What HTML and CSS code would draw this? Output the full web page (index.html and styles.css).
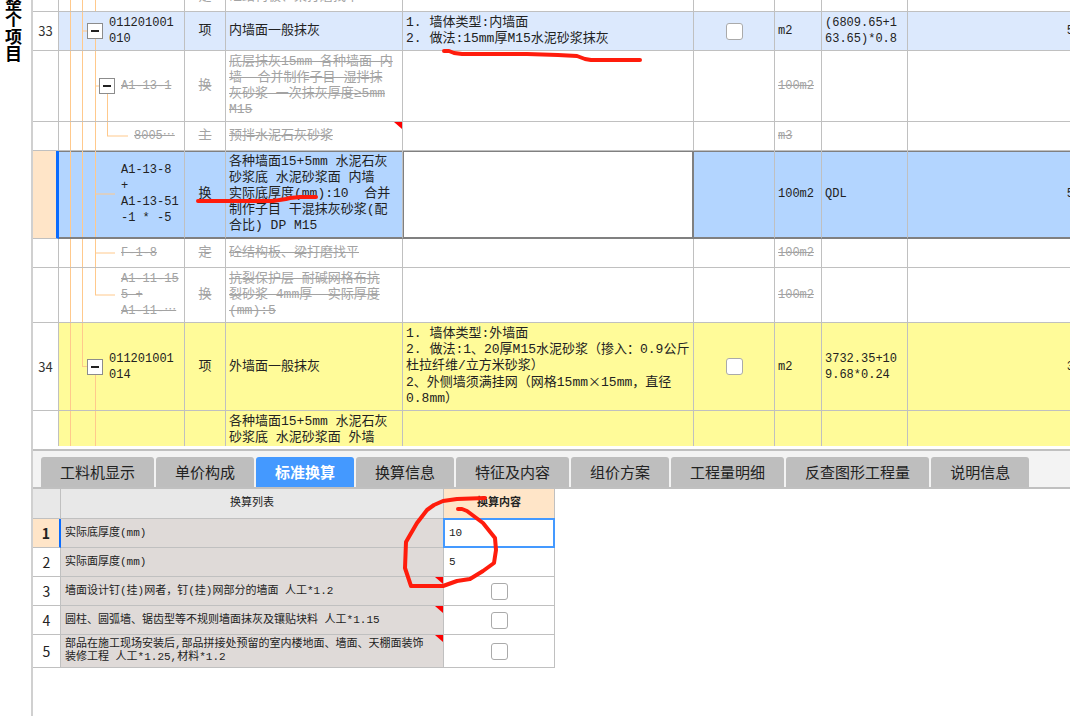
FILE: index.html
```html
<!DOCTYPE html>
<html lang="zh-CN">
<head>
<meta charset="utf-8">
<title>整个项目</title>
<link rel="stylesheet" href="styles.css">
</head>
<body>
<aside class="rail"><span class="rail-label">整个项目</span></aside>
<main class="workspace">
  <section class="bill">
    <table class="bill-table">
      <colgroup>
        <col class="w-num"><col class="w-code"><col class="w-kind"><col class="w-name"><col class="w-feature"><col class="w-lock"><col class="w-unit"><col class="w-expr"><col>
      </colgroup>
      <tbody>
        <tr class="removed">
          <td class="num"></td>
          <td class="code d2"><svg class="tree"><path d="M11.5 0V99M23.5 0V99M36.5 0V99"/></svg><div class="node">F-1-3</div></td>
          <td class="kind">定</td><td>砼结构板、梁打磨找平</td><td></td><td></td><td class="half">100m2</td><td></td><td></td>
        </tr>
        <tr class="item">
          <td class="num">33</td>
          <td class="code d1"><svg class="tree"><path d="M11.5 0V99M23.5 0V99"/><line x1="23" x2="30" y1="50%" y2="50%"/><line x1="36.5" x2="36.5" y1="50%" y2="100%"/></svg><div class="node"><button class="toggle" aria-label="折叠"></button><span>011201001<br>010</span></div></td>
          <td class="kind">项</td><td>内墙面一般抹灰</td>
          <td>1. 墙体类型:内墙面<br>2. 做法:15mm厚M15水泥砂浆抹灰</td>
          <td class="lock"><input type="checkbox" aria-label="锁定 33"></td>
          <td class="half">m2</td><td class="half">(6809.65+1<br>63.65)*0.8</td><td class="half qty">5</td>
        </tr>
        <tr class="removed">
          <td class="num"></td>
          <td class="code d2"><svg class="tree"><path d="M11.5 0V99M23.5 0V99M36.5 0V99"/><line x1="36" x2="42" y1="50%" y2="50%"/><line x1="48.5" x2="48.5" y1="50%" y2="100%"/></svg><div class="node"><button class="toggle" aria-label="折叠"></button><span>A1-13-1</span></div></td>
          <td class="kind">换</td>
          <td>底层抹灰15mm 各种墙面 内<br>墙&nbsp; 合并制作子目 湿拌抹<br>灰砂浆 一次抹灰厚度≥5mm<br>M15</td>
          <td></td><td></td><td class="half">100m2</td><td></td><td></td>
        </tr>
        <tr class="removed">
          <td class="num"></td>
          <td class="code d3"><svg class="tree"><path d="M11.5 0V99M23.5 0V99M36.5 0V99"/><line x1="48.5" x2="48.5" y1="0" y2="50%"/><line x1="48" x2="69" y1="50%" y2="50%"/></svg><div class="node">8005⋯</div></td>
          <td class="kind">主</td><td class="noted">预拌水泥石灰砂浆</td><td></td><td></td><td class="half">m3</td><td></td><td></td>
        </tr>
        <tr class="selected">
          <td class="num"></td>
          <td class="code d2"><svg class="tree"><path d="M11.5 0V99M23.5 0V99M36.5 0V99"/><line x1="36" x2="56" y1="50%" y2="50%"/></svg><div class="node">A1-13-8<br>+<br>A1-13-51<br>-1 * -5</div></td>
          <td class="kind">换</td>
          <td>各种墙面15+5mm 水泥石灰<br>砂浆底 水泥砂浆面 内墙<br>实际底厚度(mm):10&nbsp; 合并<br>制作子目 干混抹灰砂浆(配<br>合比) DP M15</td>
          <td class="active"></td><td></td><td class="half">100m2</td><td class="half">QDL</td><td class="half qty">5</td>
        </tr>
        <tr class="removed">
          <td class="num"></td>
          <td class="code d2"><svg class="tree"><path d="M11.5 0V99M23.5 0V99M36.5 0V99"/><line x1="36" x2="56" y1="50%" y2="50%"/></svg><div class="node">F-1-8</div></td>
          <td class="kind">定</td><td>砼结构板、梁打磨找平</td><td></td><td></td><td class="half">100m2</td><td></td><td></td>
        </tr>
        <tr class="removed">
          <td class="num"></td>
          <td class="code d2"><svg class="tree"><path d="M11.5 0V99M23.5 0V99"/><line x1="36.5" x2="36.5" y1="0" y2="50%"/><line x1="36" x2="56" y1="50%" y2="50%"/></svg><div class="node">A1-11-15<br>5 +<br>A1-11-⋯</div></td>
          <td class="kind">换</td>
          <td>抗裂保护层 耐碱网格布抗<br>裂砂浆 4mm厚&nbsp; 实际厚度<br>(mm):5</td>
          <td></td><td></td><td class="half">100m2</td><td></td><td></td>
        </tr>
        <tr class="marked">
          <td class="num">34</td>
          <td class="code d1"><svg class="tree"><path d="M11.5 0V99"/><line x1="23.5" x2="23.5" y1="0" y2="50%"/><line x1="23" x2="30" y1="50%" y2="50%"/><line x1="36.5" x2="36.5" y1="50%" y2="100%"/></svg><div class="node"><button class="toggle" aria-label="折叠"></button><span>011201001<br>014</span></div></td>
          <td class="kind">项</td><td>外墙面一般抹灰</td>
          <td>1. 墙体类型:外墙面<br>2. 做法:1、20厚M15水泥砂浆（掺入：0.9公斤<br>杜拉纤维/立方米砂浆）<br>2、外侧墙须满挂网（网格15mm<span class="full">×</span>15mm，直径<br>0.8mm）</td>
          <td class="lock"><input type="checkbox" aria-label="锁定 34"></td>
          <td class="half">m2</td><td class="half">3732.35+10<br>9.68*0.24</td><td class="half qty">3</td>
        </tr>
        <tr class="marked">
          <td class="num"></td>
          <td class="code d2"><svg class="tree"><path d="M11.5 0V99M36.5 0V99"/></svg></td>
          <td></td>
          <td>各种墙面15+5mm 水泥石灰<br>砂浆底 水泥砂浆面 外墙<br>合并制作子目&nbsp; 湿拌抹灰</td>
          <td></td><td></td><td></td><td></td><td></td>
        </tr>
      </tbody>
    </table>
  </section>
  <section class="detail">
    <nav class="tabs">
      <button class="tab">工料机显示</button>
      <button class="tab">单价构成</button>
      <button class="tab current">标准换算</button>
      <button class="tab">换算信息</button>
      <button class="tab">特征及内容</button>
      <button class="tab">组价方案</button>
      <button class="tab">工程量明细</button>
      <button class="tab">反查图形工程量</button>
      <button class="tab">说明信息</button>
    </nav>
    <table class="convert">
      <colgroup><col class="w-idx"><col class="w-list"><col class="w-value"></colgroup>
      <thead><tr><th></th><th>换算列表</th><th class="hot">换算内容</th></tr></thead>
      <tbody>
        <tr><td class="idx on">1</td><td class="rule">实际底厚度(mm)</td><td class="value editing"><input type="text" value="10" aria-label="实际底厚度(mm)"></td></tr>
        <tr><td class="idx">2</td><td class="rule">实际面厚度(mm)</td><td class="value"><input type="text" value="5" aria-label="实际面厚度(mm)"></td></tr>
        <tr><td class="idx">3</td><td class="rule noted">墙面设计钉(挂)网者，钉(挂)网部分的墙面 人工*1.2</td><td class="lock"><input type="checkbox" aria-label="换算 3"></td></tr>
        <tr><td class="idx">4</td><td class="rule noted">圆柱、圆弧墙、锯齿型等不规则墙面抹灰及镶贴块料 人工*1.15</td><td class="lock"><input type="checkbox" aria-label="换算 4"></td></tr>
        <tr class="tall"><td class="idx">5</td><td class="rule noted">部品在施工现场安装后,部品拼接处预留的室内楼地面、墙面、天棚面装饰<br>装修工程 人工*1.25,材料*1.2</td><td class="lock"><input type="checkbox" aria-label="换算 5"></td></tr>
      </tbody>
    </table>
  </section>
</main>
<svg class="ink" width="1070" height="716" viewBox="0 0 1070 716" aria-hidden="true">
  <path d="M444 51H449L454 53L462 54H527L558 55L577 56L585 59L591 60H640"/>
  <path d="M198 201H273L286 199L290 198L300 197H316"/>
  <path d="M485 498L457 499L443 501L434 505L427 510L417 523L410 535L406 542L405 568L408 577L411 586H443L457 581L470 579L483 571L494 563L496 550L495 538L483 523L467 511L462 509H458"/>
</svg>
</body>
</html>
```
FILE: styles.css
```css
* { box-sizing: border-box; }

body {
  margin: 0;
  height: 100vh;
  display: flex;
  overflow: hidden;
  position: relative;
  background: #fff;
  color: #222;
  font: 13px/16px "Liberation Mono", "Noto Sans CJK SC", monospace;
}

.rail {
  flex: none;
  width: 31px;
  padding-left: 4px;
  overflow: hidden;
}
.rail-label {
  display: block;
  margin-top: -6px;
  writing-mode: vertical-rl;
  font: 700 17px/18px "Noto Sans CJK SC", sans-serif;
  color: #000;
}

.workspace {
  flex: 1;
  min-width: 0;
  display: grid;
  grid-template-rows: minmax(0, 446fr) minmax(0, 270fr);
  border-left: 2px solid #d0d0d0;
}

table {
  table-layout: fixed;
  border-collapse: separate;
  border-spacing: 0;
}
td, th {
  border-right: 1px solid #c0c0c0;
  border-bottom: 1px solid #c0c0c0;
}

/* Bill of quantities */
.bill { overflow: hidden; }
.bill-table {
  width: calc(100% + 5px);
  margin-top: -17px;
}
.bill-table td {
  height: 29px;
  padding: 3px 0 3px 3px;
  white-space: nowrap;
  overflow: hidden;
}
.w-num { width: 26px; }
.w-code { width: 126px; }
.w-kind { width: 41px; }
.w-name { width: 177px; }
.w-feature { width: 291px; }
.w-lock { width: 81px; }
.w-unit { width: 47px; }
.w-expr { width: 86px; }

.half, .code { font-size: 12px; }
.full { font-family: "Noto Sans CJK SC", sans-serif; line-height: 1; }
.bill-table .num {
  padding: 0;
  text-align: center;
  background: #fff;
  color: #333;
  font-family: "Noto Sans CJK SC", sans-serif;
}
.bill-table .kind, .bill-table .lock {
  padding-left: 0;
  text-align: center;
}
.bill-table .qty {
  padding-right: 0;
  text-align: right;
}
.bill-table .code {
  position: relative;
  padding-left: 0;
}
.node { position: relative; }
.node:has(.toggle) {
  display: flex;
  align-items: center;
  gap: 6px;
}
.d1 .node { padding-left: 28px; }
.d2 .node { padding-left: 62px; }
.d2 .node:has(.toggle) { padding-left: 40px; }
.d3 .node { padding-left: 75px; }

.tree {
  position: absolute;
  inset: 0;
  width: 100%;
  height: 100%;
  fill: none;
  stroke: #ffc98c;
}
.toggle {
  flex: none;
  width: 16px;
  height: 16px;
  padding: 0;
  border: 1px solid #8c8c8c;
  background: linear-gradient(#222, #222) center / 8px 2px no-repeat #fff;
}

.item td { background: #dce9fd; }
.marked td { background: #fffb99; }
.removed td {
  color: #a3a3a3;
  text-decoration: line-through;
}
.selected td {
  background: #b3d5ff;
  border-bottom: 2px solid #808080;
  box-shadow: inset 0 1px #808080;
}
.bill-table .selected .num {
  background: #ffe5c8;
  border-bottom: 1px solid #c0c0c0;
  border-right: 3px solid #0a6cff;
  box-shadow: none;
}
.bill-table .selected .active {
  background: #fff;
  border-right: 2px solid #808080;
  box-shadow: inset 1px 1px #808080;
}

.noted { position: relative; }
.noted::after {
  content: "";
  position: absolute;
  top: 0;
  right: 0;
  width: 8px;
  height: 7px;
  background: #f00;
  clip-path: polygon(0 0, 100% 0, 100% 100%);
}

input[type="checkbox"] {
  appearance: none;
  display: block;
  width: 17px;
  height: 17px;
  margin: 0 auto;
  border: 1px solid #aaa;
  border-radius: 3px;
  background: #fff;
}

/* Detail pane */
.detail {
  padding-top: 3px;
}
.tabs {
  display: flex;
  gap: 2px;
  padding: 6px 8px 0;
  border-top: 2px solid #c0c0c0;
  border-bottom: 2px solid #c0c0c0;
  background: #f3f3f3;
}
.tab {
  height: 30px;
  padding: 0 19px;
  border: 0;
  border-radius: 3px 3px 0 0;
  background: #bebebe;
  color: #222;
  font: 15px/30px "Noto Sans CJK SC", sans-serif;
  white-space: nowrap;
}
.tab.current {
  background: #4499ff;
  color: #fff;
  font-weight: 700;
}

.convert {
  width: 522px;
  font-size: 11px;
  line-height: 13px;
}
.w-idx { width: 28px; }
.w-list { width: 383px; }
.w-value { width: 111px; }
.convert th {
  height: 30px;
  padding: 0;
  background: #e8e8e8;
  font-weight: 400;
}
.convert .hot {
  background: #ffe5c8;
  font-weight: 700;
}
.convert td {
  height: 29px;
  padding: 0;
}
.convert .tall td { height: 33px; }
.convert .idx {
  text-align: center;
  font-family: "Noto Sans CJK SC", sans-serif;
  font-size: 14px;
}
.convert .on {
  background: #ffe5c8;
  border-right: 2px solid #0a6cff;
  font-weight: 700;
}
.convert .rule {
  padding-left: 4px;
  background: #dfdad8;
  white-space: nowrap;
}
.value input {
  display: block;
  width: 100%;
  height: 28px;
  padding: 0 5px;
  border: 0;
  outline: 0;
  background: #fff;
  color: #222;
  font-family: "Liberation Mono", monospace;
  font-size: 11px;
}
.editing input { box-shadow: 0 0 0 1px #4499ff, inset 0 0 0 1px #4499ff; }

.ink {
  position: absolute;
  top: 0;
  left: 0;
  pointer-events: none;
  fill: none;
  stroke: #ff1c0c;
  stroke-width: 4;
  stroke-linecap: round;
  stroke-linejoin: round;
}
```
